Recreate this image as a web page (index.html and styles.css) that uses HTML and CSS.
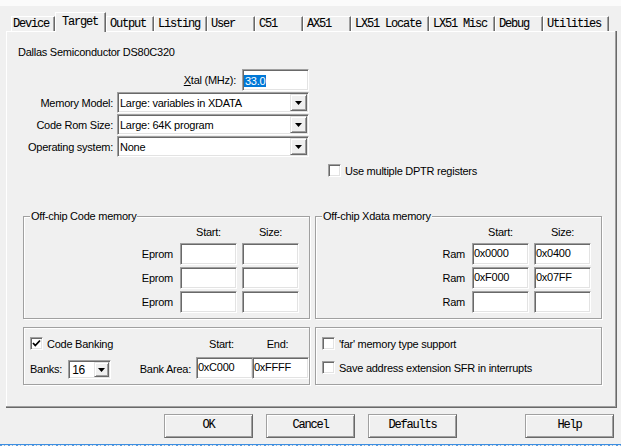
FILE: index.html
```html
<!DOCTYPE html>
<html>
<head>
<meta charset="utf-8">
<link rel="stylesheet" href="styles.css">
</head>
<body>
<div class="topstrip"></div>
<div class="tabs">
  <div class="tab first">Device</div>
  <div class="tab active">Target</div>
  <div class="tab">Output</div>
  <div class="tab">Listing</div>
  <div class="tab">User</div>
  <div class="tab">C51</div>
  <div class="tab">AX51</div>
  <div class="tab wide">LX51 Locate</div>
  <div class="tab wide">LX51 Misc</div>
  <div class="tab">Debug</div>
  <div class="tab wide">Utilities</div>
</div>
<div class="panel">
  <div class="device-name">Dallas Semiconductor DS80C320</div>

  <div class="xtal-row">
    <span class="xtal-label"><u>X</u>tal (MHz):</span>
    <div class="field xtal"><span class="selected">33.0</span></div>
  </div>

  <div class="combo-grid">
    <span class="lbl">Memory Model:</span>
    <div class="combo"><span class="combo-text">Large: variables in XDATA</span><span class="drop"><svg width="7" height="4" viewBox="0 0 7 4"><polygon points="0,0 7,0 3.5,4" fill="#000"/></svg></span></div>
    <span class="lbl">Code Rom Size:</span>
    <div class="combo"><span class="combo-text">Large: 64K program</span><span class="drop"><svg width="7" height="4" viewBox="0 0 7 4"><polygon points="0,0 7,0 3.5,4" fill="#000"/></svg></span></div>
    <span class="lbl">Operating system:</span>
    <div class="combo"><span class="combo-text">None</span><span class="drop"><svg width="7" height="4" viewBox="0 0 7 4"><polygon points="0,0 7,0 3.5,4" fill="#000"/></svg></span></div>
  </div>

  <div class="chk-row dptr"><span class="check"></span><span>Use multiple DPTR registers</span></div>

  <div class="groups">
    <div class="group mem">
      <div class="group-title">Off-chip Code memory</div>
      <div class="mem-grid">
        <span></span><span class="hdr">Start:</span><span class="hdr">Size:</span>
        <span class="rowlbl">Eprom</span><div class="field"></div><div class="field"></div>
        <span class="rowlbl">Eprom</span><div class="field"></div><div class="field"></div>
        <span class="rowlbl">Eprom</span><div class="field"></div><div class="field"></div>
      </div>
    </div>
    <div class="group mem">
      <div class="group-title">Off-chip Xdata memory</div>
      <div class="mem-grid">
        <span></span><span class="hdr">Start:</span><span class="hdr">Size:</span>
        <span class="rowlbl">Ram</span><div class="field">0x0000</div><div class="field">0x0400</div>
        <span class="rowlbl">Ram</span><div class="field">0xF000</div><div class="field">0x07FF</div>
        <span class="rowlbl">Ram</span><div class="field"></div><div class="field"></div>
      </div>
    </div>
  </div>

  <div class="groups second">
    <div class="group bank">
      <div class="chk-row"><span class="check"><svg width="11" height="11" viewBox="0 0 11 11"><polyline points="2,5 4.3,7.5 9,2.5" fill="none" stroke="#000" stroke-width="1.8"/></svg></span><span>Code Banking</span></div>
      <span></span>
      <span class="hdr">Start:</span>
      <span class="hdr">End:</span>
      <div class="banks"><span class="banks-label">Banks:</span><div class="combo small"><span class="combo-text">16</span><span class="drop"><svg width="7" height="4" viewBox="0 0 7 4"><polygon points="0,0 7,0 3.5,4" fill="#000"/></svg></span></div></div>
      <span class="area-label">Bank Area:</span>
      <div class="field">0xC000</div>
      <div class="field">0xFFFF</div>
    </div>
    <div class="group opts">
      <div class="chk-row"><span class="check"></span><span>&#39;far&#39; memory type support</span></div>
      <div class="chk-row"><span class="check"></span><span>Save address extension SFR in interrupts</span></div>
    </div>
  </div>
</div>

<div class="buttons">
  <div class="btn">OK</div>
  <div class="btn">Cancel</div>
  <div class="btn">Defaults</div>
  <div class="btn help">Help</div>
</div>
<div class="footer"></div>
</body>
</html>
```
FILE: styles.css
```css
* { box-sizing: border-box; margin: 0; padding: 0; }
html, body { width: 621px; height: 446px; overflow: hidden; }
body {
  background: #f0f0f0;
  font-family: "Liberation Sans", Arial, sans-serif;
  font-size: 11px;
  letter-spacing: -0.25px;
  color: #000;
}
.topstrip { height: 6px; background: #fbfbfb; }

.tabs {
  display: flex;
  align-items: flex-end;
  height: 25px;
  padding-left: 11px;
  font-family: "Liberation Mono", "Courier New", monospace;
  font-size: 12px;
  letter-spacing: -1.2px;
  -webkit-text-stroke: 0.08px #000;
}
.tab {
  height: 15px;
  line-height: 14px;
  padding: 0 6px 0 3px;
  min-width: 48px;
  border-top: 1px solid #fff;
  border-left: 1px solid #fff;
  border-right: 1px solid #696969;
  box-shadow: inset -1px 0 0 #a0a0a0;
  white-space: nowrap;
  background: #f0f0f0;
}
.tab.wide { padding-right: 7px; }
.tab.first { padding: 0 5px 0 1px; min-width: 0; }
.tab.active {
  height: 20px;
  margin-bottom: -1px;
  padding: 2px 7px 0 6px;
  position: relative;
  z-index: 1;
}

.panel {
  display: flow-root;
  margin-left: 6px;
  width: 611px;
  height: 377px;
  box-shadow: inset -1px -1px 0 #696969, inset -2px -2px 0 #a0a0a0, inset 1px 1px 0 #fff;
}
.device-name { margin: 14px 0 0 12px; height: 14px; line-height: 14px; }

.xtal-row {
  display: flex;
  justify-content: flex-end;
  align-items: center;
  width: 303px;
  height: 22px;
  margin-top: 10px;
}
.xtal-label { margin-right: 6px; }
.xtal-label u { text-decoration: underline; }

.field {
  background: #fff;
  border: 1px solid;
  border-color: #a0a0a0 #fff #fff #a0a0a0;
  box-shadow: inset 1px 1px 0 #696969, inset -1px -1px 0 #e3e3e3;
  width: 57px;
  height: 22px;
  line-height: 18px;
  padding-left: 1px;
  white-space: nowrap;
}
.field.xtal { width: 67px; padding-left: 1px; display: flex; align-items: center; }
.selected { background: #0078d7; color: #fff; line-height: 12px; height: 12px; padding: 0 1px; margin-top: 1px; }

.combo-grid {
  display: grid;
  grid-template-columns: 107px 192px;
  grid-auto-rows: 21px;
  column-gap: 4px;
  row-gap: 1px;
  margin-top: 1px;
}
.lbl { justify-self: end; align-self: center; }

.combo {
  display: flex;
  align-items: center;
  background: #fff;
  border: 1px solid;
  border-color: #a0a0a0 #fff #fff #a0a0a0;
  box-shadow: inset 1px 1px 0 #696969, inset -1px -1px 0 #e3e3e3;
  height: 21px;
}
.combo-text { padding-left: 2px; flex: 1; white-space: nowrap; }
.drop {
  display: flex;
  align-items: center;
  justify-content: center;
  width: 17px;
  height: 17px;
  margin-right: 1px;
  background: #f0f0f0;
  border: 1px solid;
  border-color: #e3e3e3 #696969 #696969 #e3e3e3;
  box-shadow: inset 1px 1px 0 #fff, inset -1px -1px 0 #a0a0a0;
}
.combo.small { width: 43px; height: 19px; align-self: flex-end; }
.combo.small .combo-text { font-size: 12px; padding-left: 3px; }
.combo.small .drop { width: 15px; height: 15px; }

.chk-row { display: flex; align-items: center; gap: 4px; height: 13px; white-space: nowrap; }
.chk-row.dptr { margin: 7px 0 0 322px; }
.check {
  display: flex;
  align-items: center;
  justify-content: center;
  flex: none;
  width: 13px;
  height: 13px;
  background: #fff;
  border: 1px solid;
  border-color: #a0a0a0 #fff #fff #a0a0a0;
  box-shadow: inset 1px 1px 0 #696969, inset -1px -1px 0 #e3e3e3;
}

.groups {
  display: grid;
  grid-template-columns: 287px 287px;
  column-gap: 5px;
  margin: 39px 0 0 17px;
}
.groups.second { margin-top: 8px; }
.group {
  border: 1px solid #a0a0a0;
  box-shadow: inset 1px 1px 0 #fff, 1px 1px 0 #fff;
}
.group.mem { height: 103px; }
.group-title {
  width: max-content;
  height: 13px;
  line-height: 13px;
  margin: -7px 0 0 6px;
  padding: 0 1px;
  background: #f0f0f0;
}
.mem-grid {
  display: grid;
  grid-template-columns: 151px 57px 57px;
  grid-template-rows: 15px 22px 22px 22px;
  column-gap: 5px;
  row-gap: 2px;
  margin-top: 3px;
}
.hdr { text-align: center; line-height: 13px; align-self: start; }
.rowlbl { justify-self: end; align-self: center; padding-right: 2px; }

.group.bank {
  height: 58px;
  display: grid;
  grid-template-columns: 1fr auto 51px 51px;
  grid-template-rows: 14px 22px;
  column-gap: 5px;
  row-gap: 6px;
  padding: 9px 6px 0 6px;
}
.group.bank .hdr { align-self: center; }
.banks { display: flex; align-items: center; }
.banks-label { margin-right: 6px; padding-top: 2px; }
.area-label { align-self: center; padding-top: 2px; }

.group.opts {
  height: 58px;
  display: flex;
  flex-direction: column;
  gap: 11px;
  padding: 9px 6px 0 6px;
}

.buttons {
  display: flex;
  gap: 13px;
  margin: 6px 0 0 164px;
  font-family: "Liberation Mono", "Courier New", monospace;
  font-size: 12px;
  letter-spacing: -1.2px;
  -webkit-text-stroke: 0.08px #000;
}
.btn {
  width: 89px;
  height: 24px;
  line-height: 21px;
  text-align: center;
  border: 1px solid;
  border-color: #a0a0a0 #696969 #696969 #a0a0a0;
  box-shadow: inset 1px 1px 0 #fff, inset -1px -1px 0 #a0a0a0;
}
.btn.help { margin-left: 55px; }

.footer {
  height: 2px;
  margin-top: 6px;
  border-top: 1px solid #3d8ee0;
  background: repeating-linear-gradient(90deg, #5a9be0 0 2px, #f0f0f0 2px 4px, #8ab8e8 4px 5px, #f0f0f0 5px 8px);
}
```
